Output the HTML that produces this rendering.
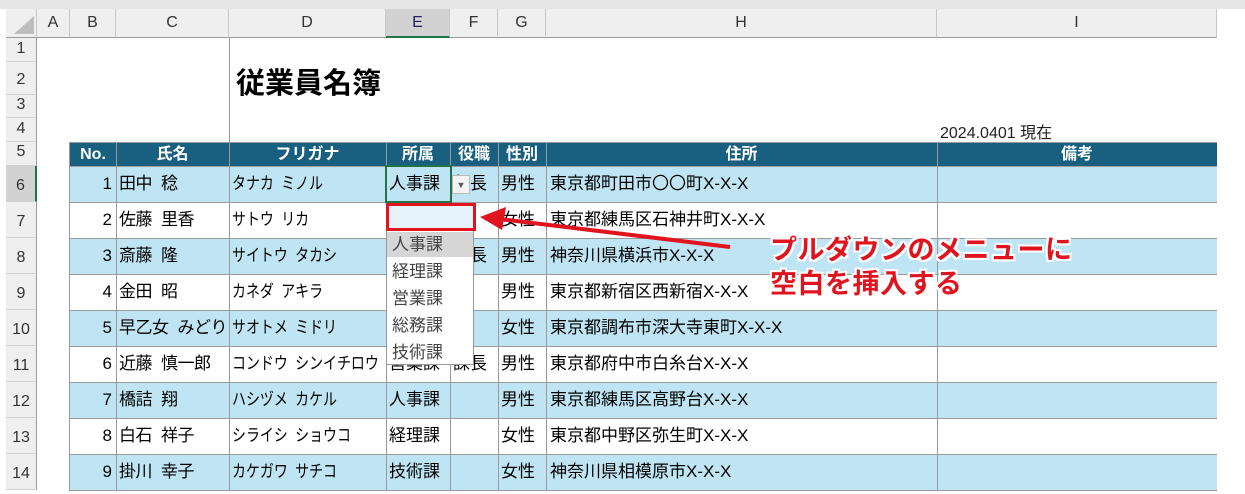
<!DOCTYPE html>
<html><head><meta charset="utf-8">
<style>
*{margin:0;padding:0;box-sizing:border-box}
body{width:1245px;height:491px;overflow:hidden;background:#fff;position:relative;font-family:"Liberation Sans","Noto Sans CJK JP",sans-serif;color:#000}
div{position:absolute}
.t{font-size:17px;line-height:36px;white-space:nowrap}
.hc{top:9px;height:29px;background:#efefef;border-right:1px solid #c8c8c8;border-bottom:1px solid #9a9a9a;text-align:center;font-size:16px;line-height:28px;color:#333}
.rh{left:6px;width:31px;background:#efefef;border-bottom:1px solid #d0d0d0;border-right:1px solid #9a9a9a;text-align:center;font-size:16px;color:#333}
.vl{width:1px;background:#9a9a9a}
.hl{height:1px;background:#9a9a9a;left:70px;width:1147px}
.h5{top:142px;height:24px;color:#fff;font-weight:bold;font-size:16px;line-height:25px;text-align:center}
.red{color:#e0141e;font-size:27px;font-weight:bold;text-shadow:-2px -2px 0 #fff,2px -2px 0 #fff,-2px 2px 0 #fff,2px 2px 0 #fff,0 2px 0 #fff,0 -2px 0 #fff,2px 0 0 #fff,-2px 0 0 #fff;white-space:nowrap;left:770px;letter-spacing:0.5px}
.dd{left:392px;font-size:17px;color:#444;line-height:27px}
.s{display:inline-block;width:9px}
</style></head><body>
<div style="left:0;top:0;width:1245px;height:9px;background:#e6e6e6"></div>
<div style="left:1217px;top:9px;width:28px;height:482px;background:#fff"></div>
<div class="hc" style="left:6px;width:31px"></div>
<div style="left:14px;top:16px;width:0;height:0;border-left:20px solid transparent;border-bottom:18px solid #bdbdbd"></div>
<div class="hc" style="left:37px;width:33px">A</div>
<div class="hc" style="left:70px;width:46px">B</div>
<div class="hc" style="left:116px;width:113px">C</div>
<div class="hc" style="left:229px;width:157px">D</div>
<div class="hc" style="left:386px;width:64px;background:#d2d2d2;border-bottom:2px solid #217346;color:#225">E</div>
<div class="hc" style="left:450px;width:48px">F</div>
<div class="hc" style="left:498px;width:48px">G</div>
<div class="hc" style="left:546px;width:391px">H</div>
<div class="hc" style="left:937px;width:280px">I</div>
<div class="rh" style="top:38px;height:24px;line-height:22px">1</div>
<div class="rh" style="top:62px;height:33px;line-height:36px">2</div>
<div class="rh" style="top:95px;height:23px;line-height:20px">3</div>
<div class="rh" style="top:118px;height:24px;line-height:22px">4</div>
<div class="rh" style="top:142px;height:24px;line-height:20px">5</div>
<div class="rh" style="top:166px;height:36px;line-height:40px;background:#d2d2d2;border-right:2px solid #217346">6</div>
<div class="rh" style="top:202px;height:36px;line-height:40px">7</div>
<div class="rh" style="top:238px;height:36px;line-height:40px">8</div>
<div class="rh" style="top:274px;height:36px;line-height:40px">9</div>
<div class="rh" style="top:310px;height:36px;line-height:40px">10</div>
<div class="rh" style="top:346px;height:36px;line-height:40px">11</div>
<div class="rh" style="top:382px;height:36px;line-height:40px">12</div>
<div class="rh" style="top:418px;height:36px;line-height:40px">13</div>
<div class="rh" style="top:454px;height:36px;line-height:40px">14</div>
<div style="left:229px;top:38px;width:1px;height:104px;background:#9a9a9a"></div>
<div style="left:236px;top:60px;font-size:29px;font-weight:bold;white-space:nowrap">従業員名簿</div>
<div style="left:940px;top:119px;font-size:16px;white-space:nowrap;color:#222">2024.0401 現在</div>
<div style="left:70px;top:142px;width:1147px;height:24px;background:#195f80"></div>
<div class="h5" style="left:70px;width:46px">No.</div>
<div class="h5" style="left:116px;width:113px">氏名</div>
<div class="h5" style="left:229px;width:157px">フリガナ</div>
<div class="h5" style="left:386px;width:64px">所属</div>
<div class="h5" style="left:450px;width:48px">役職</div>
<div class="h5" style="left:498px;width:48px">性別</div>
<div class="h5" style="left:546px;width:391px">住所</div>
<div class="h5" style="left:937px;width:280px">備考</div>
<div style="left:70px;top:166px;width:1147px;height:36px;background:#bfe5f4"></div>
<div style="left:70px;top:238px;width:1147px;height:36px;background:#bfe5f4"></div>
<div style="left:70px;top:310px;width:1147px;height:36px;background:#bfe5f4"></div>
<div style="left:70px;top:382px;width:1147px;height:36px;background:#bfe5f4"></div>
<div style="left:70px;top:454px;width:1147px;height:36px;background:#bfe5f4"></div>
<div class="hl" style="top:142px"></div>
<div class="hl" style="top:166px"></div><div class="hl" style="top:202px"></div><div class="hl" style="top:238px"></div>
<div class="hl" style="top:274px"></div><div class="hl" style="top:310px"></div><div class="hl" style="top:346px"></div>
<div class="hl" style="top:382px"></div><div class="hl" style="top:418px"></div><div class="hl" style="top:454px"></div><div class="hl" style="top:490px"></div>
<div class="vl" style="left:69px;top:142px;height:349px"></div>
<div class="vl" style="left:116px;top:142px;height:349px"></div>
<div class="vl" style="left:229px;top:142px;height:349px"></div>
<div class="vl" style="left:386px;top:142px;height:349px"></div>
<div class="vl" style="left:450px;top:142px;height:349px"></div>
<div class="vl" style="left:498px;top:142px;height:349px"></div>
<div class="vl" style="left:546px;top:142px;height:349px"></div>
<div class="vl" style="left:937px;top:142px;height:349px"></div>
<div class="t" style="left:70px;width:42px;text-align:right;top:166px">1<br>2<br>3<br>4<br>5<br>6<br>7<br>8<br>9</div>
<div class="t" style="left:119px;top:166px;letter-spacing:-0.5px">田中<span class="s"></span>稔<br>佐藤<span class="s"></span>里香<br>斎藤<span class="s"></span>隆<br>金田<span class="s"></span>昭<br>早乙女<span class="s"></span>みどり<br>近藤<span class="s"></span>慎一郎<br>橋詰<span class="s"></span>翔<br>白石<span class="s"></span>祥子<br>掛川<span class="s"></span>幸子</div>
<div class="t" style="left:232px;top:166px;font-size:17px;transform:scaleX(0.82);transform-origin:0 0">タナカ<span class="s"></span>ミノル<br>サトウ<span class="s"></span>リカ<br>サイトウ<span class="s"></span>タカシ<br>カネダ<span class="s"></span>アキラ<br>サオトメ<span class="s"></span>ミドリ<br>コンドウ<span class="s"></span>シンイチロウ<br>ハシヅメ<span class="s"></span>カケル<br>シライシ<span class="s"></span>ショウコ<br>カケガワ<span class="s"></span>サチコ</div>
<div class="t" style="left:389px;top:166px">人事課<br><br><br><br><br>営業課<br>人事課<br>経理課<br>技術課</div>
<div class="t" style="left:453px;top:166px">部長<br><br>課長<br><br><br>課長</div>
<div class="t" style="left:501px;top:166px">男性<br>女性<br>男性<br>男性<br>女性<br>男性<br>男性<br>女性<br>女性</div>
<div class="t" style="left:550px;top:166px">東京都町田市〇〇町X-X-X<br>東京都練馬区石神井町X-X-X<br>神奈川県横浜市X-X-X<br>東京都新宿区西新宿X-X-X<br>東京都調布市深大寺東町X-X-X<br>東京都府中市白糸台X-X-X<br>東京都練馬区高野台X-X-X<br>東京都中野区弥生町X-X-X<br>神奈川県相模原市X-X-X</div>
<div style="left:385px;top:165px;width:67px;height:38px;border:2px solid #217346"></div>
<div style="left:452px;top:175px;width:18px;height:19px;background:#f4f4f4;border:1px solid #bbb;font-size:9px;text-align:center;line-height:18px;color:#555">▼</div>
<div style="left:386px;top:203px;width:88px;height:162px;background:#fff;border:1px solid #999"></div>
<div style="left:387px;top:232px;width:86px;height:25px;background:#d6d6d6"></div>
<div class="dd" style="top:231px">人事課<br>経理課<br>営業課<br>総務課<br>技術課</div>
<div style="left:386px;top:203px;width:90px;height:28px;background:#e6f3fd;border:3px solid #e0141e"></div>
<svg style="position:absolute;left:0;top:0" width="1245" height="491">
<line x1="730" y1="247" x2="500" y2="219" stroke="#e0141e" stroke-width="4"/>
<polygon points="480,217 506,207 502,230" fill="#e0141e"/>
</svg>
<div class="red" style="top:228px">プルダウンのメニューに</div>
<div class="red" style="top:262px">空白を挿入する</div>
</body></html>
